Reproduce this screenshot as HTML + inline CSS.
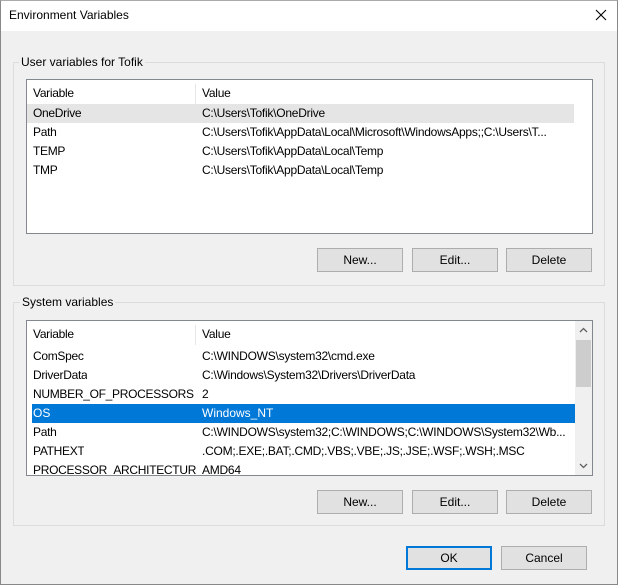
<!DOCTYPE html>
<html><head><meta charset="utf-8"><style>
*{margin:0;padding:0;box-sizing:border-box}
body{width:618px;height:585px;background:#f0f0f0;font-family:"Liberation Sans",sans-serif;font-size:12px;color:#000;position:relative;overflow:hidden}
.abs{position:absolute}
.win{position:absolute;left:0;top:0;width:618px;height:585px;border:1px solid #888;border-top:1px solid #aaa}
.title{position:absolute;left:1px;top:1px;width:616px;height:30px;background:#fff}
.grp{position:absolute;border:1px solid #dcdcdc}
.glbl{position:absolute;background:#f0f0f0;padding:0 2px;font-size:12px;white-space:nowrap}
.list{position:absolute;background:#fff;border:1px solid #828790;overflow:hidden}
.row{position:absolute;left:0;height:19px;line-height:19px;white-space:nowrap;width:547px}
.row span{position:absolute;top:0}
.c1{left:6px;max-width:164px;overflow:hidden;letter-spacing:-0.3px}.c2{left:175px;letter-spacing:-0.25px}
.btn{position:absolute;height:24px;background:#e1e1e1;border:1px solid #adadad;text-align:center;line-height:22px}
</style></head><body>
<div class="win"></div>
<div class="title"></div>
<div class="abs" style="left:9px;top:8px;font-size:12px">Environment Variables</div>
<svg class="abs" style="left:595px;top:9px" width="12" height="12"><path d="M1 1L11 11M11 1L1 11" stroke="#000" stroke-width="1.1"/></svg>

<div class="grp" style="left:13px;top:62px;width:592px;height:224px"></div>
<div class="glbl" style="left:19px;top:55px">User variables for Tofik</div>
<div class="list" style="left:26px;top:79px;width:567px;height:155px">
 <div class="row" style="top:2px;height:22px;line-height:22px"><span class="c1">Variable</span><span style="left:168px;top:2px;width:1px;height:20px;background:#e5e5e5"></span><span class="c2">Value</span></div>
 <div class="row" style="top:24px;background:#e5e5e5"><span class="c1">OneDrive</span><span class="c2">C:\Users\Tofik\OneDrive</span></div>
 <div class="row" style="top:43px"><span class="c1">Path</span><span class="c2">C:\Users\Tofik\AppData\Local\Microsoft\WindowsApps;;C:\Users\T...</span></div>
 <div class="row" style="top:62px"><span class="c1">TEMP</span><span class="c2">C:\Users\Tofik\AppData\Local\Temp</span></div>
 <div class="row" style="top:81px"><span class="c1">TMP</span><span class="c2">C:\Users\Tofik\AppData\Local\Temp</span></div>
</div>
<div class="btn" style="left:317px;top:248px;width:86px">New...</div>
<div class="btn" style="left:412px;top:248px;width:86px">Edit...</div>
<div class="btn" style="left:506px;top:248px;width:86px">Delete</div>

<div class="grp" style="left:13px;top:302px;width:592px;height:224px"></div>
<div class="glbl" style="left:20px;top:295px">System variables</div>
<div class="list" style="left:26px;top:320px;width:567px;height:156px">
 <div class="row" style="top:2px;height:22px;line-height:22px"><span class="c1">Variable</span><span style="left:168px;top:2px;width:1px;height:20px;background:#e5e5e5"></span><span class="c2">Value</span></div>
 <div class="row" style="top:26px"><span class="c1">ComSpec</span><span class="c2">C:\WINDOWS\system32\cmd.exe</span></div>
 <div class="row" style="top:45px"><span class="c1">DriverData</span><span class="c2">C:\Windows\System32\Drivers\DriverData</span></div>
 <div class="row" style="top:64px"><span class="c1">NUMBER_OF_PROCESSORS</span><span class="c2">2</span></div>
 <div class="row" style="top:83px;background:#0078d7;color:#fff;left:5px;width:543px"><span style="left:1px">OS</span><span style="left:170px">Windows_NT</span></div>
 <div class="row" style="top:102px"><span class="c1">Path</span><span class="c2">C:\WINDOWS\system32;C:\WINDOWS;C:\WINDOWS\System32\Wb...</span></div>
 <div class="row" style="top:121px"><span class="c1">PATHEXT</span><span class="c2">.COM;.EXE;.BAT;.CMD;.VBS;.VBE;.JS;.JSE;.WSF;.WSH;.MSC</span></div>
 <div class="row" style="top:140px"><span class="c1">PROCESSOR_ARCHITECTURE</span><span class="c2">AMD64</span></div>
 <div class="abs" style="left:548px;top:0;width:17px;height:154px;background:#f0f0f0"></div>
 <div class="abs" style="left:549px;top:19px;width:15px;height:47px;background:#cdcdcd"></div>
 <svg class="abs" style="left:551px;top:6px" width="11" height="7"><path d="M2 5L5.5 1.5L9 5" stroke="#606060" fill="none" stroke-width="1.3"/></svg>
 <svg class="abs" style="left:551px;top:141px" width="11" height="7"><path d="M2 2L5.5 5.5L9 2" stroke="#606060" fill="none" stroke-width="1.3"/></svg>
</div>
<div class="btn" style="left:317px;top:490px;width:86px">New...</div>
<div class="btn" style="left:412px;top:490px;width:86px">Edit...</div>
<div class="btn" style="left:506px;top:490px;width:86px">Delete</div>

<div class="btn" style="left:406px;top:546px;width:86px;border:2px solid #0078d7;line-height:20px">OK</div>
<div class="btn" style="left:501px;top:546px;width:86px">Cancel</div>
</body></html>
